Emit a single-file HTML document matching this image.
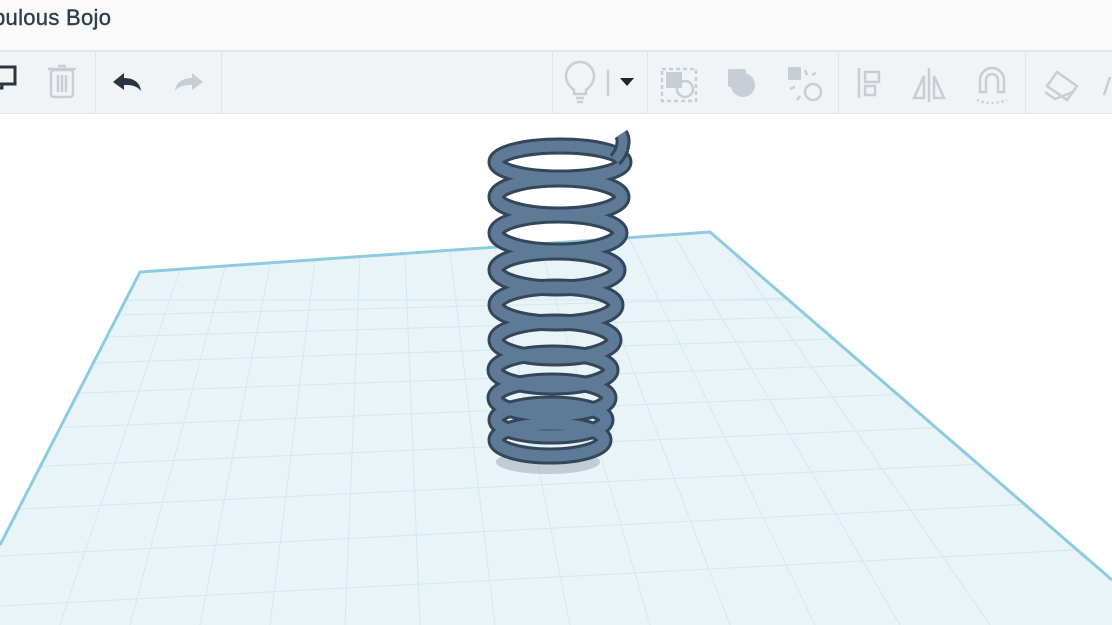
<!DOCTYPE html>
<html><head><style>
html,body{margin:0;padding:0;width:1112px;height:625px;overflow:hidden;background:#fff;font-family:"Liberation Sans",sans-serif}
.title{position:absolute;left:0;top:0;width:1112px;height:50px;background:#fafafb;border-bottom:2px solid #e3e5e8}
.title span{position:absolute;left:-7px;top:5px;font-size:22px;color:#2d3e50;letter-spacing:.3px;-webkit-text-stroke:.4px #2d3e50}
.tb{position:absolute;left:0;top:52px;width:1112px;height:61px;background:#f2f3f5;border-bottom:1px solid #e3e5e8}
.sep{position:absolute;top:0;width:1px;height:61px;background:#e1e3e6}
</style></head><body>
<div class="title"><span>bulous Bojo</span></div>
<div class="tb">
<div class="sep" style="left:95px"></div><div class="sep" style="left:221px"></div>
<div class="sep" style="left:552px"></div><div class="sep" style="left:647px"></div>
<div class="sep" style="left:838px"></div><div class="sep" style="left:1025px"></div>
<svg width="1112" height="61" style="position:absolute;left:0;top:0">
<g fill="none" stroke="#2b3440" stroke-width="3"><rect x="-4" y="15" width="19" height="17"/><path d="M2 32v4h-6"/></g>
<g fill="none" stroke="#c7ced6" stroke-width="2.5"><rect x="51" y="18" width="22" height="27" rx="3"/><path d="M48 17h28M58 14h8M58 23v17M62 23v17M66 23v17"/></g>
<path d="M113 30l11-9v5c9 0 16 4 17 13-4-5-9-6-17-6v5z" fill="#2b3440"/>
<path d="M203 30l-11-9v5c-9 0-16 4-17 13 4-5 9-6 17-6v5z" fill="#c7ced6"/>
<g fill="none" stroke="#c7ced6" stroke-width="2.5">
<path d="M574 38c-6-5-8-9-8-14a14 14 0 0 1 28 0c0 5-2 9-8 14v4h-12z M576 46h8M577 50h6"/>
<path d="M608 18v26"/>
<rect x="662" y="17" width="34" height="32" stroke-dasharray="4 3"/>
<circle cx="685" cy="37" r="8"/>
<path d="M859 16v30"/><rect x="865" y="20" width="14" height="10"/><rect x="865" y="34" width="10" height="9"/>
<path d="M929 16v34M924 24l-10 22h10zM934 24l10 22h-10z"/>
<path d="M980 40V28a12 12 0 0 1 24 0v12h-6V28a6 6 0 0 0-12 0v12z"/>
<path d="M977 48c8 4 20 4 30 0" stroke-dasharray="2 3"/>
<path d="M1047 34l10-14 20 14-10 14zM1045 40l10 7 20-8" />
<path d="M1110 25l-6 18"/>
</g>
<path d="M620 26h14l-7 8z" fill="#1c2530"/>
<g fill="#c7ced6"><rect x="666" y="20" width="16" height="16"/><rect x="728" y="17" width="18" height="18" rx="2"/><circle cx="743" cy="33" r="12"/><rect x="788" y="15" width="13" height="13"/><circle cx="813" cy="40" r="8" fill="none" stroke="#c7ced6" stroke-width="2.5"/><path d="M805 18l2 5M812 23l4-2M795 35l-5 2M800 44l-3 4" stroke="#c7ced6" stroke-width="2.5"/></g>
</svg>
</div>
<svg width="1112" height="512" viewBox="0 113 1112 512" style="position:absolute;left:0;top:113px">
<defs><clipPath id="pl"><polygon points="140,272 710,232 1112,580 1112,625 0,625 0,545"/></clipPath></defs>
<polygon points="140,272 710,232 1112,580 1112,625 0,625 0,545" fill="#e9f4f8"/>
<g clip-path="url(#pl)" stroke="#d3e8f0" stroke-width="1">
<path d="M180 270L60 625M225 267L130 625M270 264L200 625M315 261L270 625M360 258L345 625M405 255L420 625M450 252L495 625M495 249L570 625M540 246L650 625M585 243L730 625M630 240L815 625M675 237L900 625M720 234L990 625"/>
<path d="M0 300H1112M0 318L1112 290M0 340L1112 308M0 366L1112 330M0 396L1112 356M0 430L1112 386M0 468L1112 420M0 510L1112 458M0 556L1112 500M0 606L1112 548"/>
</g>
<polyline points="0,545 140,272 710,232 1112,580" fill="none" stroke="#8ccbe0" stroke-width="3"/>
<ellipse cx="548" cy="462" rx="52" ry="12" fill="#9aa6b0" opacity=".5"/>
<g fill="none">
<g stroke="#34465a" stroke-width="17">
<ellipse cx="550" cy="440" rx="54" ry="16"/><ellipse cx="551" cy="420" rx="55" ry="16"/><ellipse cx="552" cy="398" rx="57" ry="17"/><ellipse cx="553" cy="370" rx="58" ry="17"/><ellipse cx="555" cy="340" rx="59" ry="18"/><ellipse cx="556" cy="305" rx="60" ry="18"/><ellipse cx="557" cy="270" rx="61" ry="18"/><ellipse cx="558" cy="233" rx="62" ry="18"/><ellipse cx="559" cy="197" rx="63" ry="18"/><ellipse cx="560" cy="162" rx="64" ry="16"/></g>
<g stroke="#5e7a96" stroke-width="11">
<ellipse cx="550" cy="440" rx="54" ry="16"/><ellipse cx="551" cy="420" rx="55" ry="16"/><ellipse cx="552" cy="398" rx="57" ry="17"/><ellipse cx="553" cy="370" rx="58" ry="17"/><ellipse cx="555" cy="340" rx="59" ry="18"/><ellipse cx="556" cy="305" rx="60" ry="18"/><ellipse cx="557" cy="270" rx="61" ry="18"/><ellipse cx="558" cy="233" rx="62" ry="18"/><ellipse cx="559" cy="197" rx="63" ry="18"/><ellipse cx="560" cy="162" rx="64" ry="16"/></g>
<path d="M615 160c8-8 10-20 6-26" stroke="#34465a" stroke-width="15"/>
<path d="M615 160c8-8 10-20 6-26" stroke="#5e7a96" stroke-width="9"/>
</g>
</svg>
</body></html>
